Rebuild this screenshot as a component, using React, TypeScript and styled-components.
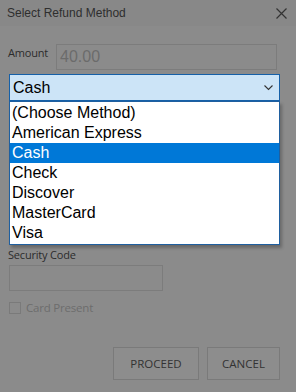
import React from "react";
import styled, { createGlobalStyle } from "styled-components";

const Global = createGlobalStyle`
  html, body { margin: 0; padding: 0; background: #8a8a8a; }
  body { width: 296px; height: 392px; overflow: hidden; font-family: "Open Sans", "Liberation Sans", sans-serif; }
`;

const Window = styled.div`
  position: relative;
  width: 296px;
  height: 392px;
  background: #8b8b8b;
  display: flex;
  flex-direction: column;
`;

const TitleBar = styled.div`
  height: 26px;
  display: flex;
  align-items: center;
  justify-content: space-between;
  padding: 0 9px 0 7px;
  background: #888888;
  font-family: "Liberation Sans", Arial, sans-serif;
  font-size: 12px;
  color: #2e2e2e;
`;

const Body = styled.div`
  flex: 1;
  display: flex;
  flex-direction: column;
  padding: 18px 16px 0 8px;
`;

const Row = styled.div`
  display: flex;
  align-items: flex-start;
  gap: 8px;
`;

const Label = styled.div<{ $dim?: boolean }>`
  font-size: 11px;
  line-height: 15px;
  color: ${(p) => (p.$dim ? "#6d6d6d" : "#2c2c2c")};
  letter-spacing: -0.2px;
`;

const Input = styled.div<{ $w: number }>`
  width: ${(p) => p.$w}px;
  height: 26px;
  box-sizing: border-box;
  border: 1px solid #7c7c7c;
  font-family: "Liberation Sans", Arial, sans-serif;
  font-size: 16px;
  color: #6b6b6b;
  padding: 2px 3px;
  line-height: 20px;
`;

const Combo = styled.div`
  margin-top: 4px;
  margin-left: 1px;
  width: 271px;
  height: 27px;
  box-sizing: border-box;
  background: #cce4f7;
  border: 1px solid #1560a8;
  display: flex;
  align-items: center;
  justify-content: space-between;
  padding: 0 6px 0 3px;
  font-family: "Liberation Sans", Arial, sans-serif;
  font-size: 16px;
  color: #000;
`;

const List = styled.div`
  position: absolute;
  left: 9px;
  top: 101px;
  width: 271px;
  box-sizing: border-box;
  background: #fff;
  border: 1px solid #1f5f9f;
  box-shadow: 2px 3px 3px rgba(0, 0, 0, 0.25);
  display: flex;
  flex-direction: column;
  padding: 1px 0;
`;

const Item = styled.div<{ $sel?: boolean }>`
  height: 20px;
  line-height: 19px;
  padding-left: 2px;
  font-family: "Liberation Sans", Arial, sans-serif;
  font-size: 16px;
  background: ${(p) => (p.$sel ? "#0078d7" : "transparent")};
  color: ${(p) => (p.$sel ? "#fff" : "#000")};
`;

const Checkbox = styled.div`
  width: 12px;
  height: 12px;
  box-sizing: border-box;
  border: 1px solid #7a7a7a;
  margin-left: 1px;
`;

const Buttons = styled.div`
  margin-top: auto;
  margin-bottom: 12px;
  display: flex;
  justify-content: flex-end;
  gap: 8px;
`;

const Button = styled.div<{ $w: number }>`
  width: ${(p) => p.$w}px;
  height: 33px;
  box-sizing: border-box;
  border: 1px solid #7a7a7a;
  background: #8d8d8d;
  display: flex;
  align-items: center;
  justify-content: center;
  font-size: 11.5px;
  color: #333;
`;

const Spacer = styled.div<{ $h: number }>`
  height: ${(p) => p.$h}px;
  flex-shrink: 0;
`;

const items = ["(Choose Method)", "American Express", "Cash", "Check", "Discover", "MasterCard", "Visa"];

export default function App() {
  return (
    <Window>
      <Global />
      <TitleBar>
        <span>Select Refund Method</span>
        <svg width="11" height="11" viewBox="0 0 11 11">
          <path d="M0.5 0.5 L10.5 10.5 M10.5 0.5 L0.5 10.5" stroke="#333" strokeWidth="1.2" />
        </svg>
      </TitleBar>
      <Body>
        <Row>
          <Label style={{ marginTop: 1 }}>Amount</Label>
          <Input $w={221}>40.00</Input>
        </Row>
        <Combo>
          <span>Cash</span>
          <svg width="9" height="6" viewBox="0 0 9 6">
            <path d="M0.5 0.5 L4.5 4.5 L8.5 0.5" stroke="#333" strokeWidth="1.1" fill="none" />
          </svg>
        </Combo>
        <Spacer $h={146} />
        <Label>Security Code</Label>
        <Spacer $h={3} />
        <Row>
          <Input $w={154} style={{ marginLeft: 1 }} />
        </Row>
        <Row style={{ marginTop: 9, alignItems: "center", gap: 5 }}>
          <Checkbox />
          <Label $dim style={{ fontSize: 11.5 }}>Card Present</Label>
        </Row>
        <Buttons>
          <Button $w={86}>PROCEED</Button>
          <Button $w={73}>CANCEL</Button>
        </Buttons>
      </Body>
      <List>
        {items.map((t) => (
          <Item key={t} $sel={t === "Cash"}>{t}</Item>
        ))}
      </List>
    </Window>
  );
}
